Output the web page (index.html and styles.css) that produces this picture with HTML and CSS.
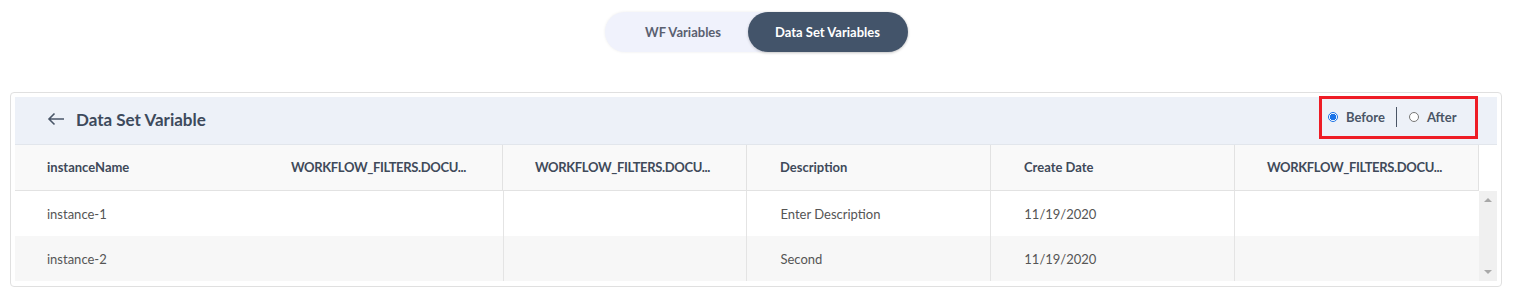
FILE: index.html
```html
<!DOCTYPE html>
<html>
<head>
<meta charset="utf-8">
<link rel="stylesheet" href="styles.css">
</head>
<body>
<div class="page">
  <div class="toggle-wrap">
    <div class="toggle">
      <span class="tab">WF Variables</span>
      <span class="tab active">Data Set Variables</span>
    </div>
  </div>
  <div class="card">
    <div class="card-head">
      <div class="title">
        <svg class="back" width="18" height="14" viewBox="0 0 18 14"><path d="M17 7H2M7.5 1.5L2 7l5.5 5.5" fill="none" stroke="#4a5668" stroke-width="1.6"/></svg>
        <span>Data Set Variable</span>
      </div>
      <div class="radios">
        <label class="radio"><span class="dot on"></span>Before</label>
        <span class="sep"></span>
        <label class="radio"><span class="dot"></span>After</label>
      </div>
    </div>
    <div class="grid">
      <div class="thead">
        <div class="th nb">instanceName</div>
        <div class="th trunc">WORKFLOW_FILTERS.DOCU...</div>
        <div class="th trunc">WORKFLOW_FILTERS.DOCU...</div>
        <div class="th">Description</div>
        <div class="th">Create Date</div>
        <div class="th trunc">WORKFLOW_FILTERS.DOCU...</div>
      </div>
      <div class="tbody">
        <div class="rows">
          <div class="tr">
            <div class="td nb">instance-1</div>
            <div class="td"></div>
            <div class="td"></div>
            <div class="td">Enter Description</div>
            <div class="td">11/19/2020</div>
            <div class="td"></div>
          </div>
          <div class="tr alt">
            <div class="td nb">instance-2</div>
            <div class="td"></div>
            <div class="td"></div>
            <div class="td">Second</div>
            <div class="td">11/19/2020</div>
            <div class="td"></div>
          </div>
        </div>
        <div class="scroll">
          <span class="arr up"></span>
          <span class="arr down"></span>
        </div>
      </div>
    </div>
  </div>
</div>
</body>
</html>
```
FILE: styles.css
```css
* { box-sizing: border-box; }
html, body { margin: 0; padding: 0; background: #fff; }
body { font-family: "Lato", "Open Sans", sans-serif; color: #3f4a5a; }
.page { padding: 12px 15px 0 10px; width: 1517px; }
.toggle-wrap { display: flex; justify-content: center; height: 80px; }
.toggle {
  display: flex; height: 40px; background: #f0f2fc; border-radius: 20px;
  box-shadow: 0 0 3px rgba(0,0,0,0.08);
}
.tab {
  display: flex; align-items: center; justify-content: center;
  font-size: 13px; font-weight: 700; color: #5a6070; border-radius: 20px;
}
.tab:first-child { width: 143px; padding-left: 14px; }
.tab.active { width: 160px; background: #43546a; color: #fff; box-shadow: 0 1px 3px rgba(0,0,0,0.2); }
.card {
  width: 1492px; border: 1px solid #e0e0e0; border-radius: 4px; padding: 4px 4px 5px 4px;
}
.card-head {
  height: 48px; background: #edf1f8; display: flex; align-items: center;
  justify-content: space-between; border-bottom: 1px solid #e2e6ec;
}
.title { display: flex; align-items: center; padding-left: 32px; padding-bottom: 3px; font-size: 17px; font-weight: 700; color: #3d4a5c; }
.back { margin-right: 11px; }
.radios {
  display: flex; align-items: center; height: 43px; width: 159px; margin-right: 19px;
  margin-top: -6px; border: 3px solid #ee1c25; padding-left: 6px; padding-bottom: 1px;
}
.radio { display: flex; align-items: center; font-size: 13px; font-weight: 700; color: #4a5566; }
.dot { width: 10px; height: 10px; border-radius: 50%; border: 1px solid #777; background: #fff; margin-right: 8px; }
.dot.on { border: 1px solid #1a73e8; background: radial-gradient(circle, #1a73e8 3px, #fff 3.5px); }
.sep { width: 1px; height: 20px; background: #4a5566; margin: 0 12px 0 11px; }
.grid { width: 1482px; }
.thead { display: flex; height: 46px; width: 1464px; background: #f9f9f9; border-bottom: 1px solid #e2e2e2; }
.th, .td {
  width: 244px; padding-left: 33px; padding-right: 10px; display: flex; align-items: center;
  white-space: nowrap; font-size: 13px;
}
.th { font-weight: 700; color: #3f4a5a; border-right: 1px solid #e2e2e2; padding-bottom: 1px; }
.th.trunc { letter-spacing: -0.35px; padding-left: 32px; }
.th.nb { border-right: 0; padding-left: 32px; }
.tbody { display: flex; }
.rows { width: 1464px; }
.tr { display: flex; height: 45px; background: #fff; }
.tr.alt { background: #f7f7f7; }
.td { color: #555; border-right: 1px solid #e4e4e4; }
.td.nb { border-right: 0; padding-left: 32px; }
.td:nth-child(2) { width: 245px; }
.td:last-child { border-right: 0; }
.scroll { width: 18px; background: #f0f0f0; display: flex; flex-direction: column; justify-content: space-between; align-items: center; padding: 7px 0 7px; }
.arr { width: 0; height: 0; border-left: 4px solid transparent; border-right: 4px solid transparent; }
.arr.up { border-bottom: 4px solid #a8a8a8; }
.arr.down { border-top: 4px solid #a8a8a8; }
```
